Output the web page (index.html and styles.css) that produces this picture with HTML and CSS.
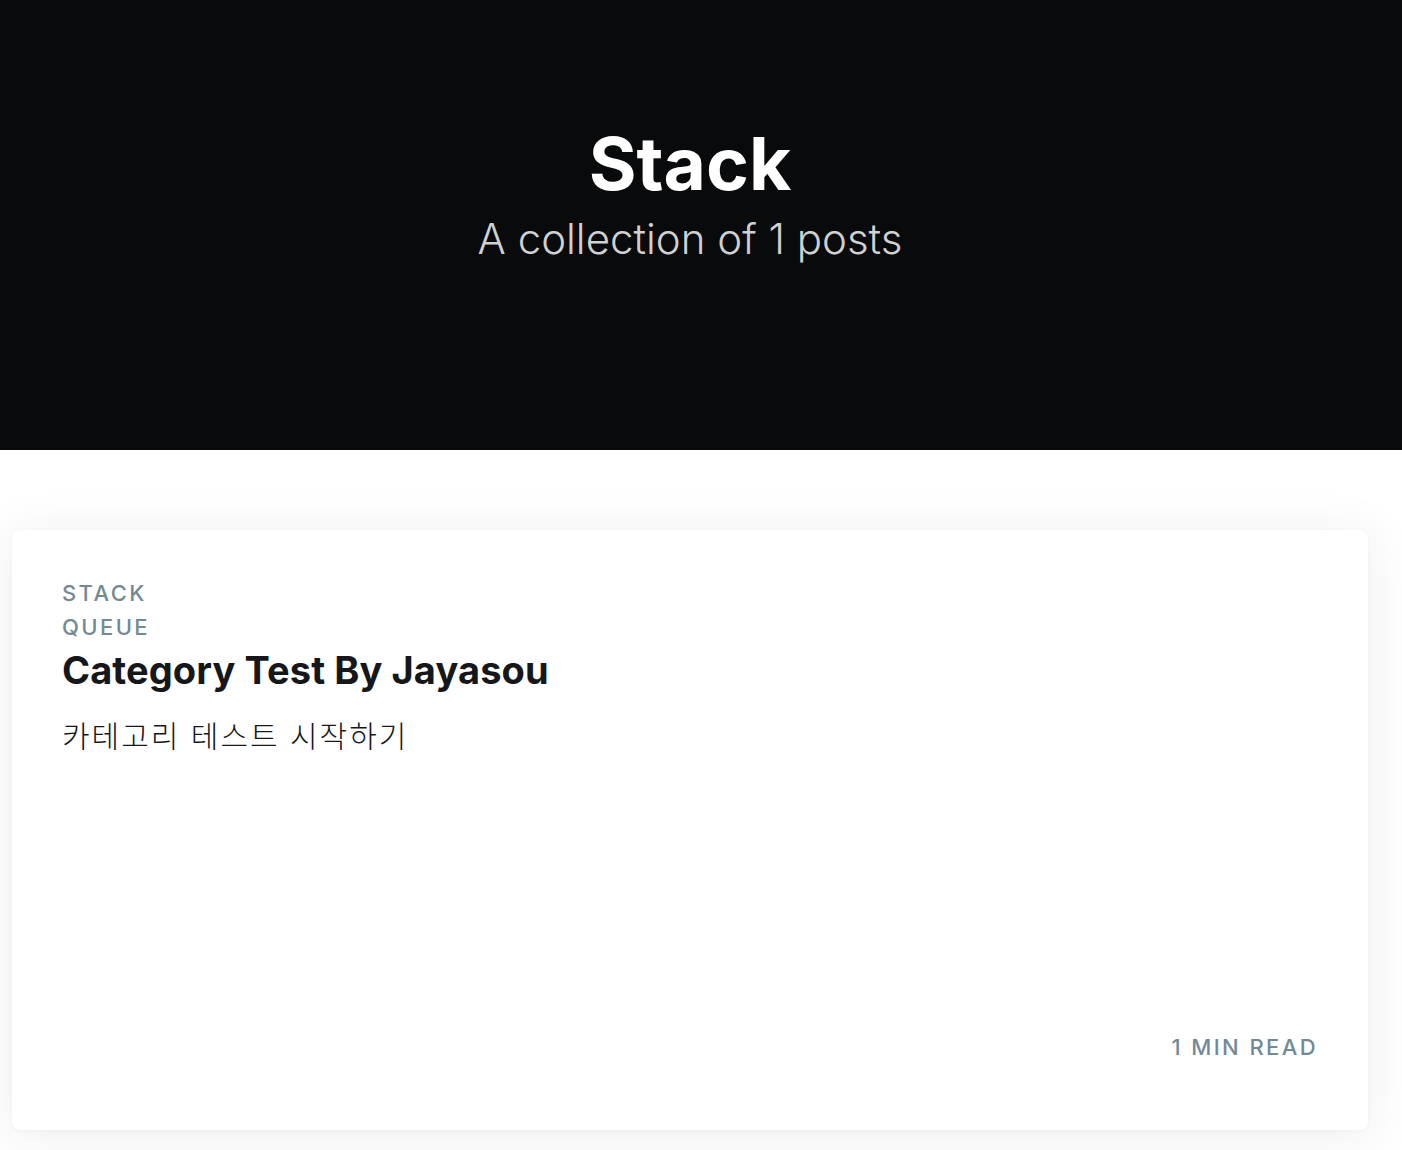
FILE: index.html
```html
<!DOCTYPE html>
<html lang="ko">
<head>
<meta charset="utf-8">
<title>Stack</title>
<link rel="stylesheet" href="styles.css">
</head>
<body>
<header class="site-header">
  <h1 class="site-title">Stack</h1>
  <p class="site-description">A collection of 1 posts</p>
</header>
<main class="site-main">
  <article class="post-card">
    <div class="post-card-content">
      <div class="post-card-tags">
        <span class="post-card-tag">Stack</span>
        <span class="post-card-tag">Queue</span>
      </div>
      <h2 class="post-card-title">Category Test By Jayasou</h2>
      <p class="post-card-excerpt">카테고리 테스트 시작하기</p>
    </div>
    <footer class="post-card-meta">
      <span class="reading-time">1 min read</span>
    </footer>
  </article>
</main>
</body>
</html>
```

FILE: styles.css
```css
html, body {
  margin: 0;
  padding: 0;
  background: #ffffff;
}

body {
  font-family: Inter, "Noto Sans", "Noto Sans CJK KR", sans-serif;
  color: #15171a;
}

.site-header {
  height: 450px;
  box-sizing: border-box;
  background: #090a0b;
  display: flex;
  flex-direction: column;
  align-items: center;
  padding: 124px 22px 0 0;
}

.site-title {
  margin: 0;
  font-size: 73px;
  line-height: 1.1;
  font-weight: 700;
  color: #ffffff;
  letter-spacing: 0;
}

.site-description {
  margin: 6px 0 0;
  font-size: 42px;
  line-height: 1.4;
  font-weight: 300;
  color: rgba(255, 255, 255, 0.82);
}

.site-main {
  padding: 80px 34px 40px 12px;
}

.post-card {
  height: 600px;
  box-sizing: border-box;
  background: #ffffff;
  border-radius: 8px;
  box-shadow: rgba(39, 44, 49, 0.07) 0 6px 50px 4px, rgba(39, 44, 49, 0.03) 0 1px 4px;
  padding: 46px 50px 50px;
  display: flex;
  flex-direction: column;
}

.post-card-content {
  flex: 1;
}

.post-card-tags {
  display: flex;
  flex-direction: column;
}

.post-card-tag {
  font-size: 22px;
  line-height: 34px;
  font-weight: 500;
  letter-spacing: 2.4px;
  text-transform: uppercase;
  color: #738a94;
}

.post-card-title {
  margin: 4px 0 0;
  font-size: 38px;
  line-height: 1.2;
  font-weight: 700;
  color: #15171a;
  letter-spacing: 0.1px;
}

.post-card-excerpt {
  margin: 18px 0 0;
  font-family: "Noto Sans CJK KR", sans-serif;
  font-size: 30px;
  line-height: 1.5;
  font-weight: 300;
  letter-spacing: 2px;
  color: #15171a;
}

.post-card-meta {
  display: flex;
  justify-content: flex-end;
  margin-bottom: 16px;
}

.reading-time {
  font-size: 22px;
  line-height: 34px;
  font-weight: 500;
  letter-spacing: 2.4px;
  text-transform: uppercase;
  color: #738a94;
}
```
